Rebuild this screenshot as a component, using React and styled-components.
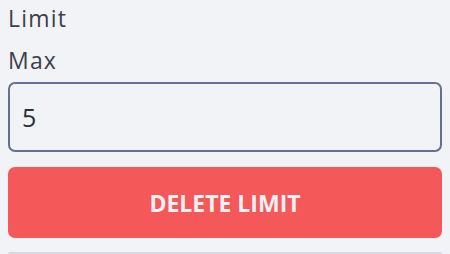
import React from "react";
import styled, { createGlobalStyle } from "styled-components";

const Global = createGlobalStyle`
  html, body { margin: 0; padding: 0; background: #f2f3f7; }
  body { font-family: "Open Sans", "Noto Sans", sans-serif; }
  * { box-sizing: border-box; }
`;

const Panel = styled.div`
  display: flex;
  flex-direction: column;
  padding: 0 8px;
`;

const Title = styled.div`
  font-size: 23px;
  line-height: 36px;
  letter-spacing: 1.2px;
  color: #3c404b;
  margin-bottom: 6px;
`;

const Label = styled.label`
  font-size: 23px;
  line-height: 36px;
  letter-spacing: 1.2px;
  color: #3c404b;
  margin-bottom: 4px;
`;

const Input = styled.input`
  height: 70px;
  width: 100%;
  border: 2px solid #66708f;
  border-radius: 7px;
  background: #f2f3f7;
  padding: 0 12px;
  font-family: inherit;
  font-size: 25px;
  color: #2b2f38;
  outline: none;
`;

const DeleteButton = styled.button`
  margin-top: 15px;
  height: 71px;
  width: 100%;
  border: none;
  border-radius: 7px;
  background: #f55858;
  color: #f2f0f5;
  font-family: inherit;
  font-weight: 700;
  font-size: 23px;
  cursor: pointer;
`;

const NextCard = styled.div`
  margin-top: 14px;
  height: 2px;
  border-top: 2px solid #d6d9e1;
  border-radius: 7px 7px 0 0;
`;

export default function App() {
  return (
    <>
      <Global />
      <Panel>
        <Title>Limit</Title>
        <Label htmlFor="max">Max</Label>
        <Input id="max" defaultValue="5" />
        <DeleteButton>DELETE LIMIT</DeleteButton>
        <NextCard />
      </Panel>
    </>
  );
}
